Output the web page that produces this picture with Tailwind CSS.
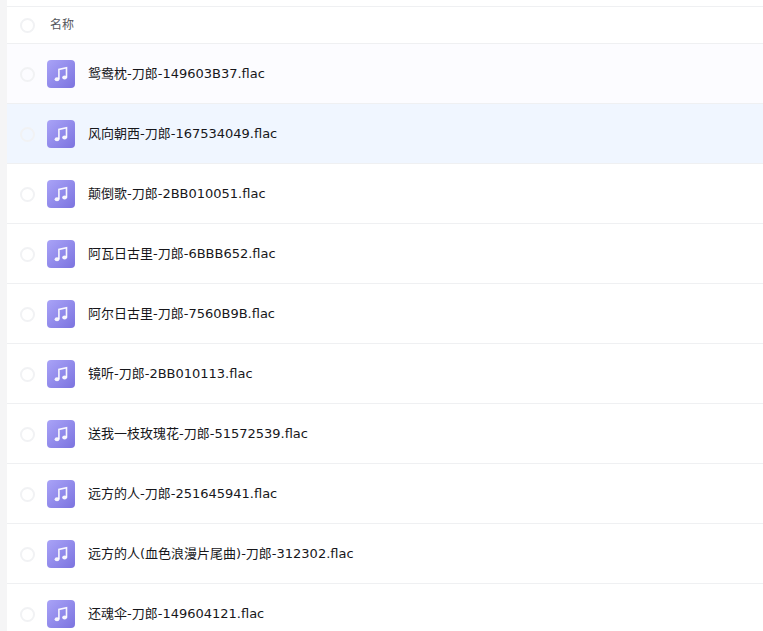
<!DOCTYPE html>
<html lang="zh">
  <head>
    <meta charset="UTF-8" />
    <title>文件列表</title>
    <script src="https://cdn.jsdelivr.net/npm/@tailwindcss/browser@4"></script>
  </head>
  <body class="h-[631px] overflow-hidden bg-[#f5f5f6] font-['DejaVu_Sans','Noto_Sans_CJK_SC',sans-serif] text-[13px] text-[#17171b]">
    <main class="ml-[7px] h-full bg-white">
      <div class="h-[6px]"></div>
      <!-- header -->
      <div class="flex h-[38px] items-center border-y border-[#eff0f2] pl-[13px]">
        <span class="size-[15px] rounded-full border-2 border-[#f1f2f4]"></span>
        <span class="ml-[8px] pl-[7px] text-xs text-[#55565c]">名称</span>
      </div>
      <!-- rows -->
      <ul>
        <li class="flex h-[60px] items-center border-b border-[#eff0f2] bg-[#fcfcff] pl-[13px]">
          <span class="mt-px size-[15px] rounded-full border-2 border-[#f1f2f4]"></span>
          <span class="ml-[12px] size-7 rounded bg-linear-to-br from-[#a9a3f7] to-[#7c73df]">
            <svg class="size-7" viewBox="0 0 28 28"><path d="M11.9 19V9.4l7.6-1.7v10" fill="none" stroke="#fff" stroke-opacity=".92" stroke-width="1.6" /><ellipse cx="10" cy="19.2" rx="2.4" ry="2" fill="#fff" fill-opacity=".92" /><ellipse cx="17.6" cy="17.6" rx="2.4" ry="2" fill="#fff" fill-opacity=".92" /></svg>
          </span>
          <span class="ml-[13px]">鸳鸯枕-刀郎-149603B37.flac</span>
        </li>
        <li class="flex h-[60px] items-center border-b border-[#eff0f2] bg-[#f0f6ff] pl-[13px]">
          <span class="mt-px size-[15px] rounded-full border-2 border-[#f1f2f4]"></span>
          <span class="ml-[12px] size-7 rounded bg-linear-to-br from-[#a9a3f7] to-[#7c73df]">
            <svg class="size-7" viewBox="0 0 28 28"><path d="M11.9 19V9.4l7.6-1.7v10" fill="none" stroke="#fff" stroke-opacity=".92" stroke-width="1.6" /><ellipse cx="10" cy="19.2" rx="2.4" ry="2" fill="#fff" fill-opacity=".92" /><ellipse cx="17.6" cy="17.6" rx="2.4" ry="2" fill="#fff" fill-opacity=".92" /></svg>
          </span>
          <span class="ml-[13px]">风向朝西-刀郎-167534049.flac</span>
        </li>
        <li class="flex h-[60px] items-center border-b border-[#eff0f2] pl-[13px]">
          <span class="mt-px size-[15px] rounded-full border-2 border-[#f1f2f4]"></span>
          <span class="ml-[12px] size-7 rounded bg-linear-to-br from-[#a9a3f7] to-[#7c73df]">
            <svg class="size-7" viewBox="0 0 28 28"><path d="M11.9 19V9.4l7.6-1.7v10" fill="none" stroke="#fff" stroke-opacity=".92" stroke-width="1.6" /><ellipse cx="10" cy="19.2" rx="2.4" ry="2" fill="#fff" fill-opacity=".92" /><ellipse cx="17.6" cy="17.6" rx="2.4" ry="2" fill="#fff" fill-opacity=".92" /></svg>
          </span>
          <span class="ml-[13px]">颠倒歌-刀郎-2BB010051.flac</span>
        </li>
        <li class="flex h-[60px] items-center border-b border-[#eff0f2] pl-[13px]">
          <span class="mt-px size-[15px] rounded-full border-2 border-[#f1f2f4]"></span>
          <span class="ml-[12px] size-7 rounded bg-linear-to-br from-[#a9a3f7] to-[#7c73df]">
            <svg class="size-7" viewBox="0 0 28 28"><path d="M11.9 19V9.4l7.6-1.7v10" fill="none" stroke="#fff" stroke-opacity=".92" stroke-width="1.6" /><ellipse cx="10" cy="19.2" rx="2.4" ry="2" fill="#fff" fill-opacity=".92" /><ellipse cx="17.6" cy="17.6" rx="2.4" ry="2" fill="#fff" fill-opacity=".92" /></svg>
          </span>
          <span class="ml-[13px]">阿瓦日古里-刀郎-6BBB652.flac</span>
        </li>
        <li class="flex h-[60px] items-center border-b border-[#eff0f2] pl-[13px]">
          <span class="mt-px size-[15px] rounded-full border-2 border-[#f1f2f4]"></span>
          <span class="ml-[12px] size-7 rounded bg-linear-to-br from-[#a9a3f7] to-[#7c73df]">
            <svg class="size-7" viewBox="0 0 28 28"><path d="M11.9 19V9.4l7.6-1.7v10" fill="none" stroke="#fff" stroke-opacity=".92" stroke-width="1.6" /><ellipse cx="10" cy="19.2" rx="2.4" ry="2" fill="#fff" fill-opacity=".92" /><ellipse cx="17.6" cy="17.6" rx="2.4" ry="2" fill="#fff" fill-opacity=".92" /></svg>
          </span>
          <span class="ml-[13px]">阿尔日古里-刀郎-7560B9B.flac</span>
        </li>
        <li class="flex h-[60px] items-center border-b border-[#eff0f2] pl-[13px]">
          <span class="mt-px size-[15px] rounded-full border-2 border-[#f1f2f4]"></span>
          <span class="ml-[12px] size-7 rounded bg-linear-to-br from-[#a9a3f7] to-[#7c73df]">
            <svg class="size-7" viewBox="0 0 28 28"><path d="M11.9 19V9.4l7.6-1.7v10" fill="none" stroke="#fff" stroke-opacity=".92" stroke-width="1.6" /><ellipse cx="10" cy="19.2" rx="2.4" ry="2" fill="#fff" fill-opacity=".92" /><ellipse cx="17.6" cy="17.6" rx="2.4" ry="2" fill="#fff" fill-opacity=".92" /></svg>
          </span>
          <span class="ml-[13px]">镜听-刀郎-2BB010113.flac</span>
        </li>
        <li class="flex h-[60px] items-center border-b border-[#eff0f2] pl-[13px]">
          <span class="mt-px size-[15px] rounded-full border-2 border-[#f1f2f4]"></span>
          <span class="ml-[12px] size-7 rounded bg-linear-to-br from-[#a9a3f7] to-[#7c73df]">
            <svg class="size-7" viewBox="0 0 28 28"><path d="M11.9 19V9.4l7.6-1.7v10" fill="none" stroke="#fff" stroke-opacity=".92" stroke-width="1.6" /><ellipse cx="10" cy="19.2" rx="2.4" ry="2" fill="#fff" fill-opacity=".92" /><ellipse cx="17.6" cy="17.6" rx="2.4" ry="2" fill="#fff" fill-opacity=".92" /></svg>
          </span>
          <span class="ml-[13px]">送我一枝玫瑰花-刀郎-51572539.flac</span>
        </li>
        <li class="flex h-[60px] items-center border-b border-[#eff0f2] pl-[13px]">
          <span class="mt-px size-[15px] rounded-full border-2 border-[#f1f2f4]"></span>
          <span class="ml-[12px] size-7 rounded bg-linear-to-br from-[#a9a3f7] to-[#7c73df]">
            <svg class="size-7" viewBox="0 0 28 28"><path d="M11.9 19V9.4l7.6-1.7v10" fill="none" stroke="#fff" stroke-opacity=".92" stroke-width="1.6" /><ellipse cx="10" cy="19.2" rx="2.4" ry="2" fill="#fff" fill-opacity=".92" /><ellipse cx="17.6" cy="17.6" rx="2.4" ry="2" fill="#fff" fill-opacity=".92" /></svg>
          </span>
          <span class="ml-[13px]">远方的人-刀郎-251645941.flac</span>
        </li>
        <li class="flex h-[60px] items-center border-b border-[#eff0f2] pl-[13px]">
          <span class="mt-px size-[15px] rounded-full border-2 border-[#f1f2f4]"></span>
          <span class="ml-[12px] size-7 rounded bg-linear-to-br from-[#a9a3f7] to-[#7c73df]">
            <svg class="size-7" viewBox="0 0 28 28"><path d="M11.9 19V9.4l7.6-1.7v10" fill="none" stroke="#fff" stroke-opacity=".92" stroke-width="1.6" /><ellipse cx="10" cy="19.2" rx="2.4" ry="2" fill="#fff" fill-opacity=".92" /><ellipse cx="17.6" cy="17.6" rx="2.4" ry="2" fill="#fff" fill-opacity=".92" /></svg>
          </span>
          <span class="ml-[13px]">远方的人(血色浪漫片尾曲)-刀郎-312302.flac</span>
        </li>
        <li class="flex h-[60px] items-center border-b border-[#eff0f2] pl-[13px]">
          <span class="mt-px size-[15px] rounded-full border-2 border-[#f1f2f4]"></span>
          <span class="ml-[12px] size-7 rounded bg-linear-to-br from-[#a9a3f7] to-[#7c73df]">
            <svg class="size-7" viewBox="0 0 28 28"><path d="M11.9 19V9.4l7.6-1.7v10" fill="none" stroke="#fff" stroke-opacity=".92" stroke-width="1.6" /><ellipse cx="10" cy="19.2" rx="2.4" ry="2" fill="#fff" fill-opacity=".92" /><ellipse cx="17.6" cy="17.6" rx="2.4" ry="2" fill="#fff" fill-opacity=".92" /></svg>
          </span>
          <span class="ml-[13px]">还魂伞-刀郎-149604121.flac</span>
        </li>
      </ul>
    </main>
  </body>
</html>
